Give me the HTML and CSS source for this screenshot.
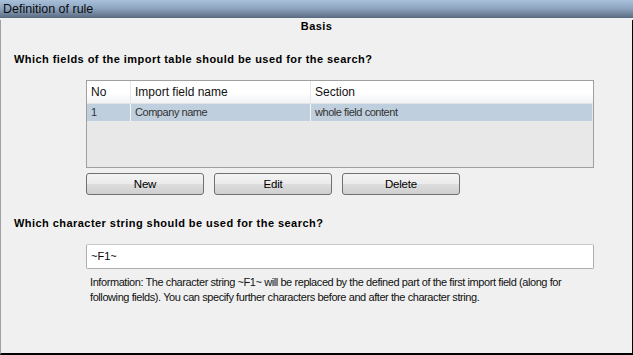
FILE: index.html
```html
<!DOCTYPE html>
<html>
<head>
<meta charset="utf-8">
<link rel="stylesheet" href="styles.css">
</head>
<body>
<div class="window">
  <div class="titlebar">Definition of rule</div>
  <div class="frame">
    <div class="basis">Basis</div>
    <div class="heading h1">Which fields of the import table should be used for the search?</div>
    <div class="grid">
      <div class="ghead">
        <div class="c c1">No</div>
        <div class="c c2">Import field name</div>
        <div class="c c3">Section</div>
      </div>
      <div class="grow sel">
        <div class="c c1">1</div>
        <div class="c c2">Company name</div>
        <div class="c c3">whole field content</div>
      </div>
    </div>
    <div class="buttons">
      <div class="btn">New</div>
      <div class="btn">Edit</div>
      <div class="btn">Delete</div>
    </div>
    <div class="heading h2">Which character string should be used for the search?</div>
    <div class="input">~F1~</div>
    <div class="info">Information: The character string ~F1~ will be replaced by the defined part of the first import field (along for following fields). You can specify further characters before and after the character string.</div>
  </div>
</div>
</body>
</html>
```
FILE: styles.css
```css
html, body {
  margin: 0;
  padding: 0;
}
body {
  width: 633px;
  height: 355px;
  background: #f0f0f0;
  overflow: hidden;
  font-family: "Liberation Sans", Arial, sans-serif;
  color: #000;
}
.window {
  display: flex;
  flex-direction: column;
  height: 355px;
}
.titlebar {
  height: 18px;
  line-height: 18px;
  padding-left: 3px;
  font-size: 12.5px;
  color: #0c0c0c;
  background: linear-gradient(to bottom, #a9c0da 0%, #8fa6c2 45%, #5a6a80 100%);
}
.frame {
  flex: 1;
  margin-top: 2px;
  border-left: 1px solid #a0a0a0;
  border-right: 1px solid #000;
  border-bottom: 2px solid #000;
  display: flex;
  flex-direction: column;
}
.basis {
  text-align: center;
  font-weight: bold;
  font-size: 11px;
  letter-spacing: 0.4px;
  line-height: 13px;
}
.heading {
  font-weight: bold;
  font-size: 11px;
  letter-spacing: 0.45px;
  line-height: 14px;
  padding-left: 13px;
}
.h1 { margin-top: 19px; }
.h2 { margin-top: 21px; }
.grid {
  margin-top: 14px;
  margin-left: 85px;
  width: 506px;
  height: 86px;
  border: 1px solid #a0a0a0;
  background: #e8e8e8;
}
.ghead, .grow {
  display: flex;
}
.ghead {
  height: 22px;
  line-height: 22px;
  font-size: 12px;
  background: linear-gradient(to bottom, #ffffff 0%, #ffffff 55%, #f2f3f5 100%);
  border-bottom: 1px solid #e2e3e5;
  color: #111;
}
.grow {
  height: 17px;
  line-height: 17px;
  margin-right: 1px;
  font-size: 11px;
  letter-spacing: -0.45px;
  color: #333;
}
.sel { background: #c0cfdd; }
.c {
  padding-left: 4px;
  box-sizing: border-box;
}
.c1 { width: 43px; }
.c2 { width: 180px; border-left: 1px solid #e6e8ea; }
.c3 { flex: 1; border-left: 1px solid #e6e8ea; }
.sel .c2, .sel .c3 { border-left-color: #f4f6f8; }
.buttons {
  display: flex;
  gap: 10px;
  margin-top: 5px;
  margin-left: 85px;
}
.btn {
  width: 118px;
  height: 22px;
  box-sizing: border-box;
  border: 1px solid #707070;
  border-radius: 3px;
  background: linear-gradient(to bottom, #f4f4f4 0%, #ebebeb 50%, #dddddd 52%, #cfcfcf 100%);
  text-align: center;
  line-height: 20px;
  font-size: 11.5px;
  letter-spacing: -0.2px;
  color: #000;
}
.input {
  margin-top: 14px;
  margin-left: 85px;
  width: 508px;
  height: 25px;
  box-sizing: border-box;
  border: 1px solid #abadb3;
  border-top-color: #c8c9cc;
  border-radius: 2px;
  background: #fff;
  padding-left: 4px;
  line-height: 23px;
  font-size: 11px;
}
.info {
  margin-top: 6px;
  margin-left: 89px;
  width: 500px;
  font-size: 11px;
  letter-spacing: -0.42px;
  line-height: 15px;
  color: #111;
}
```
